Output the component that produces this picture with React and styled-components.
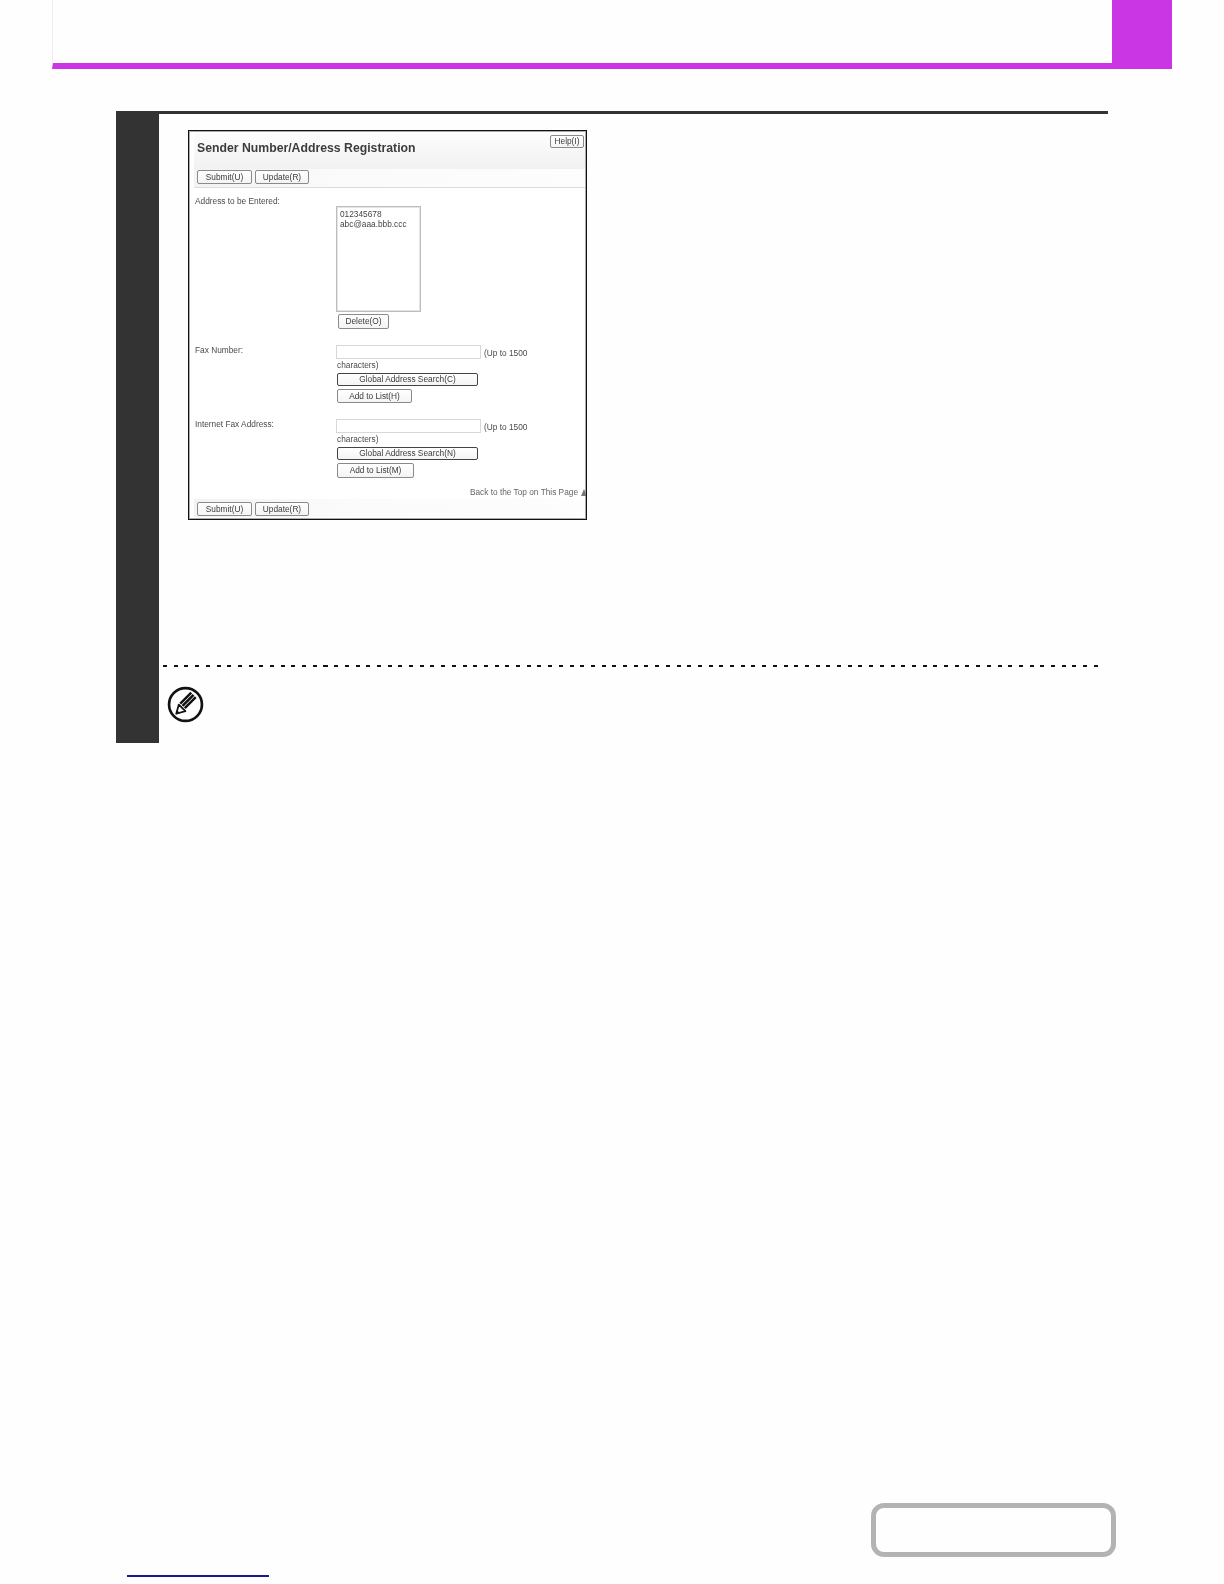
import React from "react";
import styled, { createGlobalStyle } from "styled-components";

const Global = createGlobalStyle`
  html, body { margin: 0; padding: 0; background: #fefefe; }
  * { box-sizing: border-box; }
`;

const Page = styled.div`
  width: 1224px;
  height: 1584px;
  overflow: hidden;
  font-family: "Liberation Sans", Arial, sans-serif;
`;

const Header = styled.header`
  margin-left: 52px;
  width: 1120px;
  height: 69px;
  display: flex;
  justify-content: space-between;
  border-bottom: 6px solid #cb36e4;
  border-left: 1px solid #f7e6f8;
`;

const ChapterTab = styled.div`
  width: 60px;
  margin-bottom: -6px;
  background: #cb36e4;
`;

const Step = styled.section`
  margin: 42px 0 0 116px;
  width: 992px;
  height: 632px;
  display: flex;
`;

const Rail = styled.div`
  width: 43px;
  background: #333;
`;

const Main = styled.div`
  flex: 1;
  border-top: 3px solid #333;
  padding-top: 16px;
  display: flex;
  flex-direction: column;
`;

const Figure = styled.div`
  margin-left: 29px;
  width: 399px;
  height: 390px;
  padding: 1px;
  border: 1px solid #111;
  box-shadow: inset 0 0 0 1px #aaa;
  background: #fff;
  color: #4a4a4a;
  font-size: 8.3px;
  display: flex;
  flex-direction: column;
  overflow: hidden;
  filter: blur(0.3px);
`;

const TitleBar = styled.div`
  margin-left: 4px;
  height: 37px;
  padding: 3px 1px 0 3px;
  display: flex;
  justify-content: space-between;
  align-items: flex-start;
  background: linear-gradient(#fdfdfd, #f1f1f1);
`;

const Title = styled.h1`
  margin: 6px 0 0;
  font-size: 12.25px;
  line-height: 14px;
  font-weight: 700;
  color: #3c3c3c;
`;

const ButtonBar = styled.div`
  margin: ${(p) => p.$gap || 0}px 0 0 4px;
  height: ${(p) => p.$height}px;
  padding: ${(p) => p.$top}px 0 0 3px;
  display: flex;
  gap: 3px;
  background: linear-gradient(90deg, #f3f3f3, #fbfbfb 40%, #fdfdfd);
  border-bottom: ${(p) => (p.$rule ? "1px solid #dcdcdc" : "0")};
`;

const Button = styled.button`
  display: block;
  width: ${(p) => p.$w}px;
  height: ${(p) => p.$h || 14}px;
  margin: 0;
  padding: 0;
  font: 8.3px/1 "Liberation Sans", Arial, sans-serif;
  color: #3a3a3a;
  background: linear-gradient(#fff, #f4f4f4);
  border: 1px solid ${(p) => (p.$strong ? "#444" : "#8a8a8a")};
  border-radius: 2px;
`;

const Form = styled.div`
  padding: 7px 0 0 5px;
  display: flex;
  flex-direction: column;
`;

const Row = styled.div`
  display: grid;
  grid-template-columns: 141px 1fr;
  margin-top: ${(p) => p.$top || 0}px;
`;

const Label = styled.div`
  line-height: 12px;
`;

const Field = styled.div`
  padding-top: ${(p) => p.$top || 0}px;
  display: flex;
  flex-direction: column;
  align-items: flex-start;
`;

const ListBox = styled.div`
  width: 85px;
  height: 106px;
  padding: 2px 3px;
  border: 1px solid #bdbdbd;
  outline: 1px solid #e4e4e4;
  outline-offset: -2px;
  line-height: 10px;
  color: #444;
`;

const Indented = styled.div`
  margin: ${(p) => p.$top || 0}px 0 0 ${(p) => p.$left || 0}px;
`;

const InputLine = styled.div`
  display: flex;
  align-items: flex-end;
  gap: 3px;
  line-height: 12px;
`;

const TextInput = styled.div`
  width: 145px;
  height: 14px;
  border: 1px solid #d8d8d8;
`;

const Wrapped = styled.div`
  margin: 1px 0 3px 1px;
  line-height: 10px;
`;

const BackRow = styled.div`
  margin-top: 9px;
  display: flex;
  justify-content: flex-end;
  align-items: center;
  gap: 3px;
  height: 10px;
  line-height: 10px;
  color: #666;
`;

const BackMark = styled.svg`
  flex: none;
  width: 6px;
  height: 7px;
  margin-right: -2px;
`;

const Dash = styled.div`
  margin: 145px 0 0 4px;
  width: 941px;
  height: 2px;
  background: repeating-linear-gradient(90deg, #111 0 4px, transparent 4px 10.7px);
`;

const NoteIcon = styled.svg`
  display: block;
  margin: 19px 0 0 8px;
  width: 37px;
  height: 37px;
`;

const NavBox = styled.div`
  margin: 760px 0 0 871px;
  width: 245px;
  height: 54px;
  border: 5px solid #b3b3b3;
  border-radius: 13px;
`;

const LinkLine = styled.div`
  margin: 18px 0 0 127px;
  width: 142px;
  height: 2px;
  background: #1b1b8a;
`;

const PencilIcon = () => (
  <NoteIcon viewBox="0 0 36 36">
    <circle cx="18" cy="18" r="16" fill="#fff" stroke="#111" strokeWidth="2.6" />
    <path d="M9 27 L11.5 18.1 L17.9 24.5 Z" fill="#fff" stroke="#111" strokeWidth="1.7" strokeLinejoin="round" />
    <path d="M9 27 L9.9 23.7 L12.3 26.1 Z" fill="#111" />
    <path
      d="M12.9 17.2 L23.6 6.5 M15.1 19.4 L25.8 8.7 M17.3 21.6 L28 10.9"
      stroke="#111"
      strokeWidth="2.4"
      strokeLinecap="butt"
      fill="none"
    />
  </NoteIcon>
);

const AddressField = ({ search, add, addW, lineTop }) => (
  <Field $top={lineTop}>
    <InputLine>
      <TextInput />
      <span>(Up to 1500</span>
    </InputLine>
    <Wrapped>characters)</Wrapped>
    <Indented $left={1}>
      <Button $w={141} $h={13} $strong>{search}</Button>
    </Indented>
    <Indented $left={1} $top={3}>
      <Button $w={addW} $h={addW > 76 ? 15 : 14}>{add}</Button>
    </Indented>
  </Field>
);

export default function App() {
  return (
    <Page>
      <Global />
      <Header>
        <span />
        <ChapterTab />
      </Header>
      <Step>
        <Rail />
        <Main>
          <Figure>
            <TitleBar>
              <Title>Sender Number/Address Registration</Title>
              <Button $w={34} $h={13}>Help(I)</Button>
            </TitleBar>
            <ButtonBar $height={19} $top={1} $rule>
              <Button $w={55}>Submit(U)</Button>
              <Button $w={54}>Update(R)</Button>
            </ButtonBar>
            <Form>
              <Row>
                <Label>Address to be Entered:</Label>
                <Field $top={11}>
                  <ListBox>
                    012345678
                    <br />
                    abc@aaa.bbb.ccc
                  </ListBox>
                  <Indented $left={2} $top={2}>
                    <Button $w={51} $h={15}>Delete(O)</Button>
                  </Indented>
                </Field>
              </Row>
              <Row $top={15}>
                <Label>Fax Number:</Label>
                <AddressField search="Global Address Search(C)" add="Add to List(H)" addW={75} lineTop={1} />
              </Row>
              <Row $top={15}>
                <Label>Internet Fax Address:</Label>
                <AddressField search="Global Address Search(N)" add="Add to List(M)" addW={77} lineTop={1} />
              </Row>
            </Form>
            <BackRow>
              Back to the Top on This Page
              <BackMark viewBox="0 0 6 7">
                <path d="M3 0 L6 7 L0 7 Z" fill="#777" />
              </BackMark>
            </BackRow>
            <ButtonBar $gap={2} $height={18} $top={3}>
              <Button $w={55}>Submit(U)</Button>
              <Button $w={54}>Update(R)</Button>
            </ButtonBar>
          </Figure>
          <Dash />
          <PencilIcon />
        </Main>
      </Step>
      <NavBox />
      <LinkLine />
    </Page>
  );
}
